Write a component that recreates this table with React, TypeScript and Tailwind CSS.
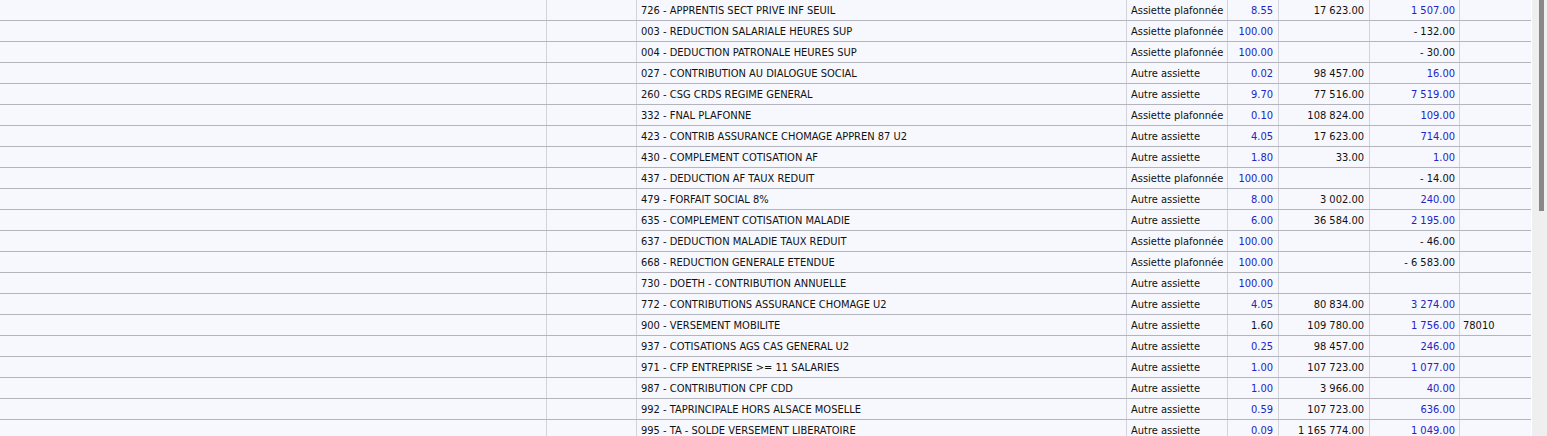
type Row = {
	label: string;
	assiette: string;
	rate: string;
	rateBlack?: boolean;
	base?: string;
	amount?: string;
	extra?: string;
};

const P = "Assiette plafonnée";
const A = "Autre assiette";

const rows: Row[] = [
	{ label: "726 - APPRENTIS SECT PRIVE INF SEUIL", assiette: P, rate: "8.55", base: "17 623.00", amount: "1 507.00" },
	{ label: "003 - REDUCTION SALARIALE HEURES SUP", assiette: P, rate: "100.00", amount: "- 132.00" },
	{ label: "004 - DEDUCTION PATRONALE HEURES SUP", assiette: P, rate: "100.00", amount: "- 30.00" },
	{ label: "027 - CONTRIBUTION AU DIALOGUE SOCIAL", assiette: A, rate: "0.02", base: "98 457.00", amount: "16.00" },
	{ label: "260 - CSG CRDS REGIME GENERAL", assiette: A, rate: "9.70", base: "77 516.00", amount: "7 519.00" },
	{ label: "332 - FNAL PLAFONNE", assiette: P, rate: "0.10", base: "108 824.00", amount: "109.00" },
	{ label: "423 - CONTRIB ASSURANCE CHOMAGE APPREN 87 U2", assiette: A, rate: "4.05", base: "17 623.00", amount: "714.00" },
	{ label: "430 - COMPLEMENT COTISATION AF", assiette: A, rate: "1.80", base: "33.00", amount: "1.00" },
	{ label: "437 - DEDUCTION AF TAUX REDUIT", assiette: P, rate: "100.00", amount: "- 14.00" },
	{ label: "479 - FORFAIT SOCIAL 8%", assiette: A, rate: "8.00", base: "3 002.00", amount: "240.00" },
	{ label: "635 - COMPLEMENT COTISATION MALADIE", assiette: A, rate: "6.00", base: "36 584.00", amount: "2 195.00" },
	{ label: "637 - DEDUCTION MALADIE TAUX REDUIT", assiette: P, rate: "100.00", amount: "- 46.00" },
	{ label: "668 - REDUCTION GENERALE ETENDUE", assiette: P, rate: "100.00", amount: "- 6 583.00" },
	{ label: "730 - DOETH - CONTRIBUTION ANNUELLE", assiette: A, rate: "100.00" },
	{ label: "772 - CONTRIBUTIONS ASSURANCE CHOMAGE U2", assiette: A, rate: "4.05", base: "80 834.00", amount: "3 274.00" },
	{ label: "900 - VERSEMENT MOBILITE", assiette: A, rate: "1.60", rateBlack: true, base: "109 780.00", amount: "1 756.00", extra: "78010" },
	{ label: "937 - COTISATIONS AGS CAS GENERAL U2", assiette: A, rate: "0.25", base: "98 457.00", amount: "246.00" },
	{ label: "971 - CFP ENTREPRISE >= 11 SALARIES", assiette: A, rate: "1.00", base: "107 723.00", amount: "1 077.00" },
	{ label: "987 - CONTRIBUTION CPF CDD", assiette: A, rate: "1.00", base: "3 966.00", amount: "40.00" },
	{ label: "992 - TAPRINCIPALE HORS ALSACE MOSELLE", assiette: A, rate: "0.59", base: "107 723.00", amount: "636.00" },
	{ label: "995 - TA - SOLDE VERSEMENT LIBERATOIRE", assiette: A, rate: "0.09", base: "1 165 774.00", amount: "1 049.00" },
];

const cell = "h-[20px] border-r border-[#d3d3db] truncate";

function TableRow({ row }: { row: Row }) {
	const negative = row.amount?.startsWith("-");
	return (
		<div className="flex h-[21px] border-b border-[#b4b4bd] leading-[22px]">
			<div className={`${cell} w-[547px]`} />
			<div className={`${cell} w-[90px]`} />
			<div className={`${cell} w-[490px] pl-[4px]`}>{row.label}</div>
			<div className={`${cell} w-[101px] pl-[4px]`}>{row.assiette}</div>
			<div className={`${cell} w-[51px] pr-[5px] text-right ${row.rateBlack ? "text-[#111]" : "text-[#2424c4]"}`}>
				{row.rate}
			</div>
			<div className={`${cell} w-[91px] pr-[5px] text-right`}>{row.base}</div>
			<div className={`${cell} w-[90px] pr-[4px] text-right ${negative ? "text-[#111]" : "text-[#2424c4]"}`}>
				{row.amount}
			</div>
			<div className="h-[20px] w-[71px] pl-[3px]">{row.extra}</div>
		</div>
	);
}

export default function App() {
	return (
		<div
			className="flex h-[436px] w-[1547px] overflow-hidden bg-white text-[11px] text-[#111]"
			style={{ fontFamily: '"DejaVu Sans Condensed", "DejaVu Sans", sans-serif' }}
		>
			<div className="flex w-[1531px] flex-col bg-[#f7f8fd]">
				{rows.map((row) => (
					<TableRow key={row.label} row={row} />
				))}
			</div>
			<div className="w-[1px]" />
			<div className="flex w-[15px] bg-[#efefef] pl-[7px]">
				<div className="h-[211px] w-[5px] bg-[#888]" />
			</div>
		</div>
	);
}
